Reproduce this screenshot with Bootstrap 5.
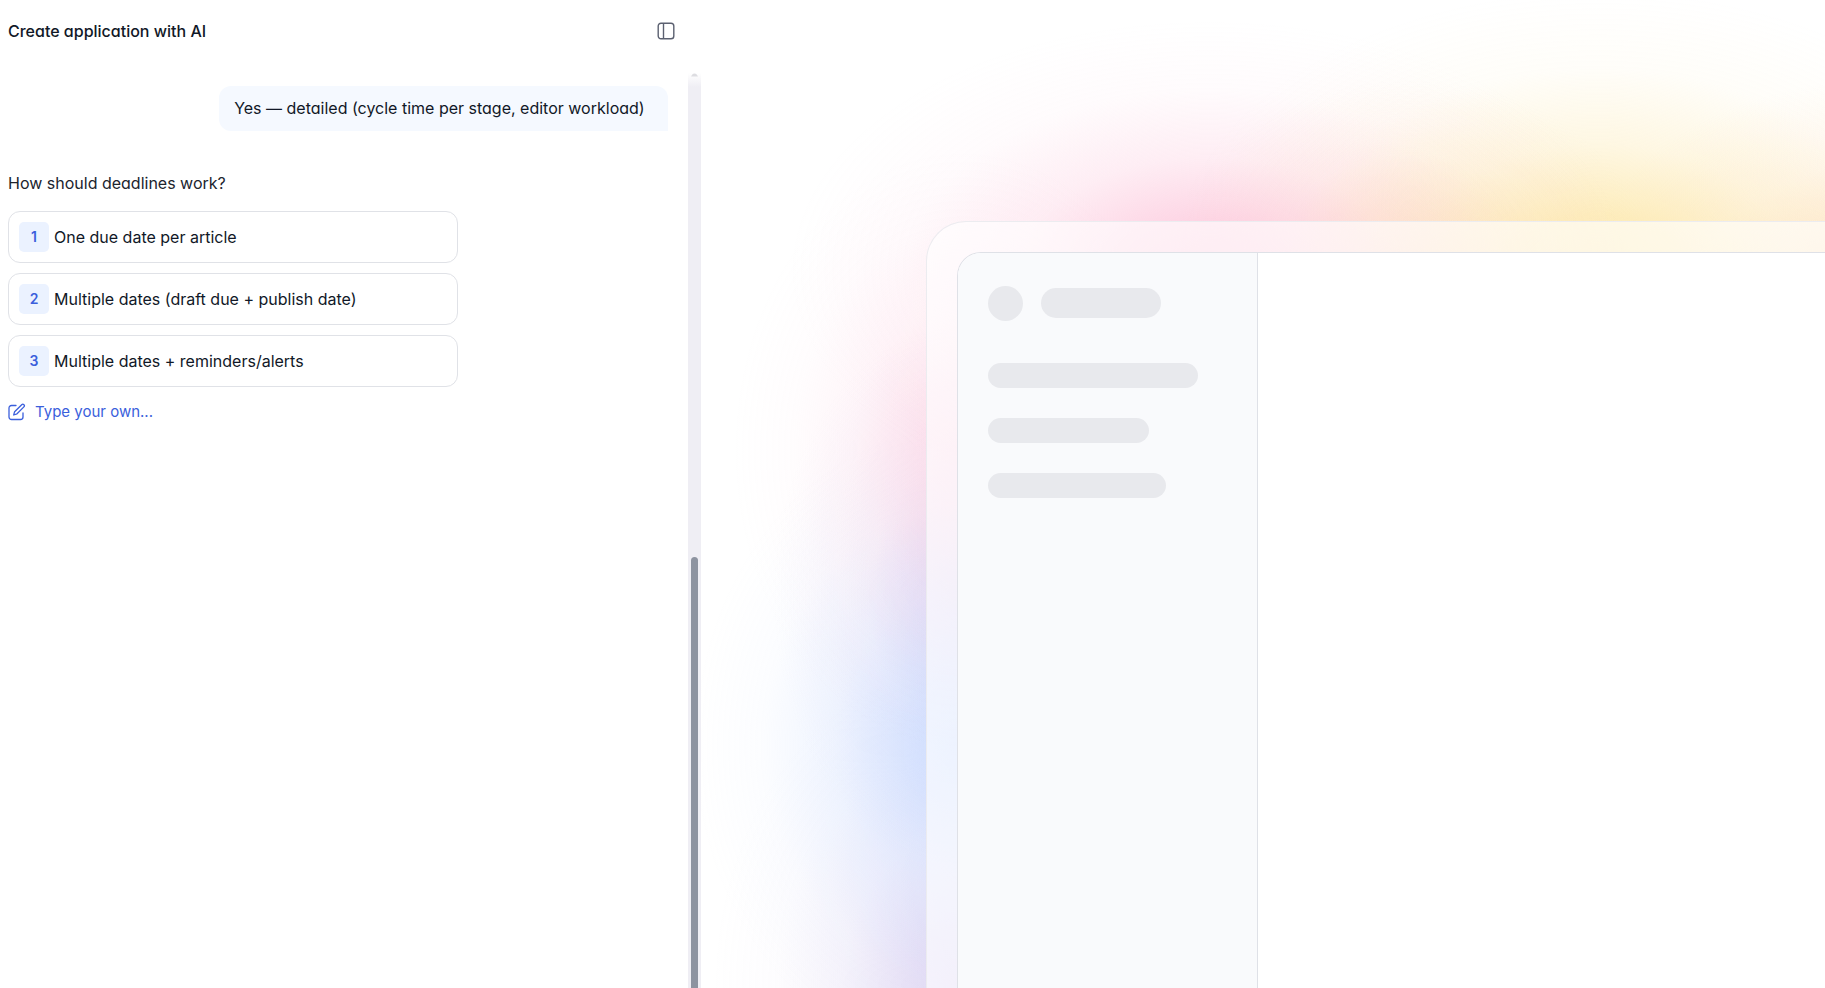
<!DOCTYPE html>
<html lang="en">
<head>
<meta charset="utf-8">
<meta name="viewport" content="width=device-width, initial-scale=1">
<title>Create application with AI</title>
<link href="https://cdn.jsdelivr.net/npm/bootstrap@5.3.0/dist/css/bootstrap.min.css" rel="stylesheet">
<style>
  body { font-family: Inter, "Liberation Sans", sans-serif; font-feature-settings: "cv11"; font-size: 16px; line-height: 24px; color: #111827; background: #fff; }
  .chat-pane { flex: 0 0 38.4%; min-width: 0; }
  .chat-header { height: 62px; padding: 0 24px 0 8px; }
  .chat-title { font-size: 16px; line-height: 24px; font-weight: 500; }
  .icon-button { color: #5b6070; line-height: 0; }
  .messages { padding: 24px 20px 0 8px; min-width: 0; }
  .bubble { min-width: 68%; background: #f5f9ff; border-radius: 12px 12px 0 12px; padding: 10px 15px 11px; margin-bottom: 40px; }
  .question { color: #20242e; margin-bottom: 16px; }
  .options { max-width: 450px; gap: 10px; }
  .option { height: 52px; border: 1px solid #e0e2e7; border-radius: 12px; background: #fff; padding: 0 10px; gap: 5px; color: #111827; }
  .option:hover { border-color: #3b5bdb; }
  .option-number { width: 30px; height: 30px; border-radius: 5px; background: #ebf2ff; color: #3b5fdc; font-size: 14px; font-weight: 600; }
  .own-link { color: #3b5fdc; font-size: 15px; gap: 9px; margin-top: 13px; }
  .scroll-track { flex: 0 0 13px; margin-top: 11px; background: linear-gradient(#fff, #efeef4 14px); }
  .scroll-arrow { height: 4px; }
  .scroll-thumb { width: 7px; margin-top: 480px; border-radius: 4px 4px 0 0; background: #8d93a0; }
  .preview-pane {
    padding: 221px 0 0 225px; overflow: hidden;
    --pink: 252, 190, 214; --yellow: 252, 226, 150; --orange: 253, 215, 180; --blue: 185, 208, 255; --purple: 205, 190, 235;
    background:
      radial-gradient(420px 250px at 508px 270px, rgba(var(--pink), .78), rgba(var(--pink), .64) 20%, rgba(var(--pink), .27) 45%, rgba(var(--pink), .06) 72%, rgba(var(--pink), 0)),
      radial-gradient(430px 280px at 897px 270px, rgba(var(--yellow), .76), rgba(var(--yellow), .62) 20%, rgba(var(--yellow), .27) 45%, rgba(var(--yellow), .06) 72%, rgba(var(--yellow), 0)),
      radial-gradient(240px 190px at 710px 270px, rgba(var(--orange), .6), rgba(var(--orange), .36) 30%, rgba(var(--orange), .12) 60%, rgba(var(--orange), 0)),
      radial-gradient(300px 210px at 1180px 290px, rgba(var(--orange), .8), rgba(var(--orange), .5) 30%, rgba(var(--orange), .18) 60%, rgba(var(--orange), 0)),
      radial-gradient(230px 300px at 262px 450px, rgba(var(--pink), .5), rgba(var(--pink), .38) 20%, rgba(var(--pink), .15) 48%, rgba(var(--pink), .04) 74%, rgba(var(--pink), 0)),
      radial-gradient(270px 320px at 262px 745px, rgba(var(--blue), .68), rgba(var(--blue), .52) 20%, rgba(var(--blue), .22) 48%, rgba(var(--blue), .05) 74%, rgba(var(--blue), 0)),
      radial-gradient(190px 270px at 262px 595px, rgba(var(--purple), .5), rgba(var(--purple), .34) 24%, rgba(var(--purple), .12) 50%, rgba(var(--purple), 0)),
      radial-gradient(250px 320px at 262px 985px, rgba(var(--purple), .64), rgba(var(--purple), .48) 20%, rgba(var(--purple), .18) 48%, rgba(var(--purple), .04) 74%, rgba(var(--purple), 0)),
      #fff;
  }
  .frame { border: 1px solid #ececf0; border-width: 1px 0 0 1px; border-radius: 40px 0 0 0; background: rgba(255, 255, 255, .64); background-clip: padding-box; padding: 30px 0 0 30px; }
  .app-window { border: 1px solid #dfe1e7; border-width: 1px 0 0 1px; border-radius: 24px 0 0 0; background: #fff; overflow: hidden; }
  .app-sidebar { flex: 0 0 300px; background: #f9fafc; border-right: 1px solid #dfe1e7; padding: 33px 30px; }
  .skeleton-dot, .skeleton-bar { background: #e8e9ed; }
  .skeleton-dot { width: 35px; height: 35px; }
  .skeleton-bar { height: 25px; }
  .skeleton-name { width: 120px; height: 30px; margin-top: 2px; }
  .skeleton-top { gap: 18px; margin-bottom: 42px; }
  .skeleton-list { gap: 30px; }
  .bar-long { width: 210px; } .bar-short { width: 161px; } .bar-mid { width: 178px; }
</style>
</head>
<body>
<div class="d-flex vh-100 overflow-hidden">
  <section class="chat-pane d-flex flex-column">
    <header class="chat-header d-flex align-items-center justify-content-between">
      <h1 class="chat-title m-0">Create application with AI</h1>
      <button type="button" class="icon-button btn p-0 border-0" aria-label="Toggle panel">
        <svg width="22" height="22" viewBox="0 0 22 22" fill="none" stroke="currentColor" stroke-width="1.4"><rect x="3.2" y="3.2" width="15.6" height="15.6" rx="2.8"/><path d="M8.5 3.2v15.6"/></svg>
      </button>
    </header>
    <div class="d-flex flex-grow-1">
      <main class="messages flex-grow-1 d-flex flex-column">
        <div class="bubble align-self-end">Yes — detailed (cycle time per stage, editor workload)</div>
        <p class="question">How should deadlines work?</p>
        <div class="options d-flex flex-column">
          <button type="button" class="option d-flex align-items-center text-start"><span class="option-number d-flex align-items-center justify-content-center">1</span>One due date per article</button>
          <button type="button" class="option d-flex align-items-center text-start"><span class="option-number d-flex align-items-center justify-content-center">2</span>Multiple dates (draft due + publish date)</button>
          <button type="button" class="option d-flex align-items-center text-start"><span class="option-number d-flex align-items-center justify-content-center">3</span>Multiple dates + reminders/alerts</button>
        </div>
        <a href="#" class="own-link d-inline-flex align-items-center align-self-start text-decoration-none">
          <svg width="18" height="18" viewBox="0 0 18 18" fill="none" stroke="currentColor" stroke-width="1.3" stroke-linecap="round" stroke-linejoin="round"><path d="M8 2.5H3.5A2.5 2.500 0 0 0 1 5v9a2.500 2.500 0 0 0 2.500 2.500h9A2.500 2.500 0 0 0 15 14v-4"/><path d="M13.700 1.700a1.500 1.500 0 0 1 2.200 2.200L9 10.800l-3.300 1.200.9-3.300z"/></svg>
          Type your own...
        </a>
      </main>
      <div class="scroll-track d-flex flex-column align-items-center" aria-hidden="true">
        <svg class="scroll-arrow" width="7" height="4" viewBox="0 0 7 4"><path d="M0 3.500C1 1.500 2 .5 3.500.5S6 1.500 7 3.500z" fill="#dddde1"/></svg>
        <div class="scroll-thumb flex-grow-1"></div>
      </div>
    </div>
  </section>
  <section class="preview-pane d-flex flex-grow-1" aria-label="Application preview">
    <div class="frame d-flex flex-grow-1">
      <div class="app-window d-flex flex-grow-1">
        <aside class="app-sidebar">
          <div class="skeleton-top d-flex align-items-start">
            <div class="skeleton-dot rounded-circle"></div>
            <div class="skeleton-bar skeleton-name rounded-pill"></div>
          </div>
          <div class="skeleton-list d-flex flex-column">
            <div class="skeleton-bar bar-long rounded-pill"></div>
            <div class="skeleton-bar bar-short rounded-pill"></div>
            <div class="skeleton-bar bar-mid rounded-pill"></div>
          </div>
        </aside>
        <div class="flex-grow-1"></div>
      </div>
    </div>
  </section>
</div>
<script src="https://cdn.jsdelivr.net/npm/bootstrap@5.3.0/dist/js/bootstrap.bundle.min.js"></script>
</body>
</html>
